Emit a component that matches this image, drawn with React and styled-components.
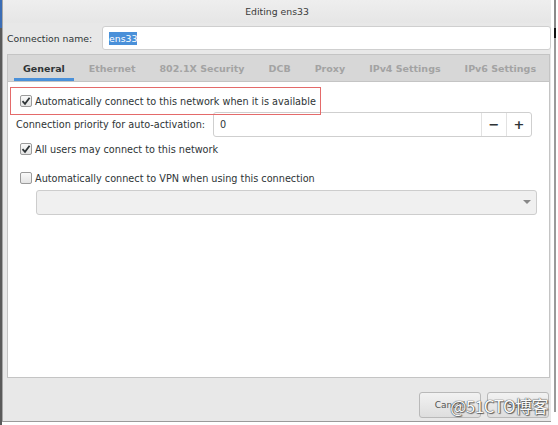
import React from 'react';
import styled, { createGlobalStyle } from 'styled-components';

const GlobalStyle = createGlobalStyle`
  body {
    margin: 0;
    background: #fff;
    font-family: 'DejaVu Sans', 'Noto Sans', sans-serif;
    font-size: 9.7px;
    color: #2e3436;
  }
`;

const Screen = styled.div`
  width: 558px;
  height: 425px;
  display: flex;
  overflow: hidden;
  position: relative;
`;

const LeftEdge = styled.div`
  width: 2px;
  background: linear-gradient(#3b6db5 0 28px, #5a5a5a 28px);
`;

const RightEdge = styled.div`
  width: 7px;
  display: flex;
  justify-content: center;
  background: #fff;
  & > div {
    width: 2px;
    height: 412px;
    background: linear-gradient(#8a8a8a 0 28px, #111 28px 38px, #9a9a9a 38px);
  }
`;

const Window = styled.div`
  width: 549px;
  height: 422px;
  display: flex;
  flex-direction: column;
  background: #e8e8e8;
  border-left: 1px solid #a8a8a8;
  border-bottom: 1px solid #9a9a9a;
  box-sizing: border-box;
`;

const TitleBar = styled.div`
  height: 23px;
  flex-shrink: 0;
  display: flex;
  align-items: center;
  justify-content: center;
  background: linear-gradient(#eeeeee, #e6e6e6);
  color: #3a3a3a;
  font-size: 9.3px;
`;

const NameRow = styled.div`
  display: flex;
  align-items: center;
  gap: 10px;
  padding: 3px 0 0 4px;
  height: 27px;
  box-sizing: border-box;
  flex-shrink: 0;
  font-size: 9.3px;
`;

const Label = styled.span`
  white-space: nowrap;
  color: #2e3436;
`;

const TextField = styled.div`
  flex: 1;
  height: 24px;
  box-sizing: border-box;
  background: #fff;
  border: 1px solid #cfcfcf;
  border-radius: 3px;
  display: flex;
  align-items: center;
  padding-left: 6px;
`;

const Selected = styled.span`
  background: #4a90d9;
  color: #fff;
  padding: 1px 0;
`;

const Notebook = styled.div`
  margin: 4px 1px 0 4px;
  border: 1px solid #c4c4c4;
  display: flex;
  flex-direction: column;
  height: 324px;
  flex-shrink: 0;
  box-sizing: border-box;
`;

const TabBar = styled.div`
  height: 27px;
  flex-shrink: 0;
  box-sizing: border-box;
  background: #d7d7d7;
  border-bottom: 1px solid #c4c4c4;
  display: flex;
  align-items: stretch;
  padding-left: 6px;
  gap: 6px;
`;

const Tab = styled.div`
  padding: 3px 9px 0;
  display: flex;
  align-items: center;
  font-weight: bold;
  font-size: 9.5px;
  color: ${({ active }) => (active ? '#2e3436' : '#a3a3a3')};
  border-bottom: 3px solid ${({ active }) => (active ? '#4a90d9' : 'transparent')};
`;

const Page = styled.div`
  flex: 1;
  background: #fff;
  padding: 5px 11px 0 2px;
  display: flex;
  flex-direction: column;
`;

const Highlight = styled.div`
  align-self: flex-start;
  flex-shrink: 0;
  position: relative;
  z-index: 1;
  border: 1px solid #e46a6a;
  padding: 0 4px 0 9px;
  height: 28px;
  box-sizing: border-box;
  display: flex;
  align-items: center;
`;

const CheckRow = styled.label`
  display: flex;
  align-items: center;
  gap: 3px;
  flex-shrink: 0;
  padding-left: ${({ indent }) => indent || 0}px;
  margin-top: ${({ top }) => top || 0}px;
`;

const Box = styled.span`
  width: 12px;
  height: 12px;
  box-sizing: border-box;
  border: 1px solid #9b9b9b;
  border-radius: 2px;
  background: linear-gradient(#fafafa, #e4e4e4);
  display: flex;
  align-items: center;
  justify-content: center;
`;

const PriorityRow = styled.div`
  display: flex;
  align-items: center;
  flex-shrink: 0;
  gap: 8px;
  padding-left: 6px;
  margin-top: -3px;
  padding-right: 6px;
`;

const SpinField = styled.div`
  flex: 1;
  height: 25px;
  box-sizing: border-box;
  border: 1px solid #cfcfcf;
  border-radius: 3px;
  background: #fff;
  display: flex;
  align-items: stretch;
`;

const SpinValue = styled.div`
  flex: 1;
  display: flex;
  align-items: center;
  padding-left: 6px;
`;

const SpinButton = styled.div`
  width: 24px;
  border-left: 1px solid #e2e2e2;
  display: flex;
  align-items: center;
  justify-content: center;
  font-weight: bold;
  font-size: 13px;
  color: #2e3436;
`;

const Combo = styled.div`
  margin: 6px 1px 0 26px;
  height: 25px;
  flex-shrink: 0;
  box-sizing: border-box;
  border: 1px solid #cdcdcd;
  border-radius: 3px;
  background: #f0f0f0;
  display: flex;
  align-items: center;
  justify-content: flex-end;
  padding-right: 5px;
`;

const ActionArea = styled.div`
  flex: 1;
  display: flex;
  justify-content: flex-end;
  align-items: flex-end;
  gap: 6px;
  padding: 0 2px 3px 0;
  position: relative;
`;

const Button = styled.div`
  width: 62px;
  height: 26px;
  box-sizing: border-box;
  border: 1px solid #b9b9b9;
  border-radius: 3px;
  background: linear-gradient(#f2f2f2, #dedede);
  display: flex;
  align-items: center;
  justify-content: center;
  color: #555;
  font-size: 9px;
`;

const Watermark = styled.div`
  position: absolute;
  right: 3px;
  bottom: 3px;
  font-family: 'Noto Sans CJK SC', 'DejaVu Sans', sans-serif;
  font-size: 17px;
  color: #fafafa;
  text-shadow: 0 0 1px #444, 0 0 1px #444, 1px 1px 1px #666;
  letter-spacing: -0.5px;
`;

const Check = ({ checked }) => (
  <Box>
    {checked && (
      <svg width="10" height="10" viewBox="0 0 10 10">
        <path d="M1.5 5.2 L4 7.8 L8.6 1.8" fill="none" stroke="#2e3436" strokeWidth="1.8" />
      </svg>
    )}
  </Box>
);

const tabs = ['General', 'Ethernet', '802.1X Security', 'DCB', 'Proxy', 'IPv4 Settings', 'IPv6 Settings'];

export default function App() {
  return (
    <>
      <GlobalStyle />
      <Screen>
        <LeftEdge />
        <Window>
          <TitleBar>Editing ens33</TitleBar>
          <NameRow>
            <Label>Connection name:</Label>
            <TextField>
              <Selected>ens33</Selected>
            </TextField>
          </NameRow>
          <Notebook>
            <TabBar>
              {tabs.map((t, i) => (
                <Tab key={t} active={i === 0}>{t}</Tab>
              ))}
            </TabBar>
            <Page>
              <Highlight>
                <CheckRow>
                  <Check checked />
                  <span>Automatically connect to this network when it is available</span>
                </CheckRow>
              </Highlight>
              <PriorityRow>
                <Label>Connection priority for auto-activation:</Label>
                <SpinField>
                  <SpinValue>0</SpinValue>
                  <SpinButton>−</SpinButton>
                  <SpinButton>+</SpinButton>
                </SpinField>
              </PriorityRow>
              <CheckRow indent={10} top={6}>
                <Check checked />
                <span>All users may connect to this network</span>
              </CheckRow>
              <CheckRow indent={10} top={17}>
                <Check />
                <span>Automatically connect to VPN when using this connection</span>
              </CheckRow>
              <Combo>
                <svg width="8" height="5" viewBox="0 0 8 5">
                  <path d="M0 0 L8 0 L4 4 Z" fill="#888" />
                </svg>
              </Combo>
            </Page>
          </Notebook>
          <ActionArea>
            <Button>Cancel</Button>
            <Button>Save</Button>
            <Watermark>@51CTO博客</Watermark>
          </ActionArea>
        </Window>
        <RightEdge><div /></RightEdge>
      </Screen>
    </>
  );
}
